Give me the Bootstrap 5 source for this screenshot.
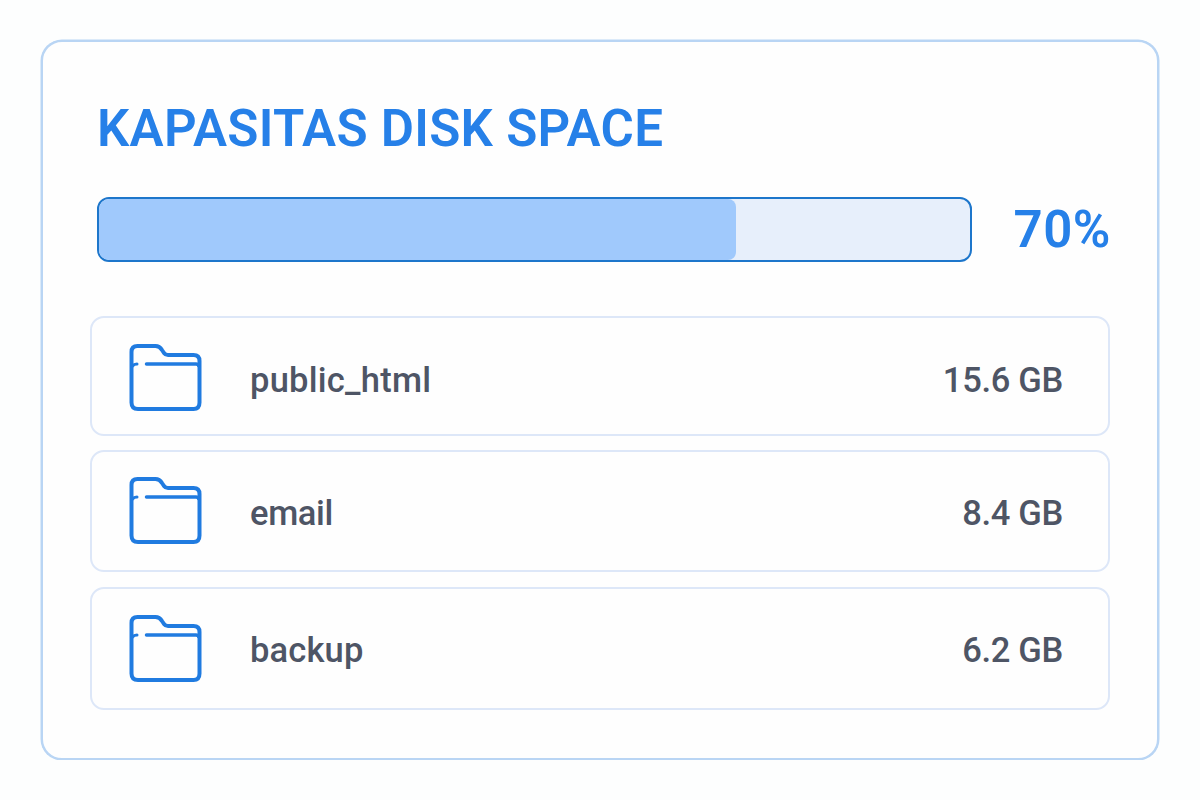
<!DOCTYPE html>
<html lang="id">
<head>
<meta charset="utf-8">
<meta name="viewport" content="width=device-width, initial-scale=1">
<title>Kapasitas Disk Space</title>
<link href="https://cdn.jsdelivr.net/npm/bootstrap@5.3.0/dist/css/bootstrap.min.css" rel="stylesheet">
<style>
  body { font-family: Roboto, "Liberation Sans", sans-serif; background: #fdfefe; color: #4e5565; }
  .disk-panel { width: 1118px; height: 720px; margin: 40px 0 0 41px; padding: 57px 47px 0 47px; border: 2px solid #b9d5f4; border-radius: 21px; background: #fefefe; box-shadow: 0 0 0 .5px #b9d5f4; }
  .disk-title { font-size: 51px; line-height: 60px; font-weight: 600; color: #2680e8; margin-left: 7px; letter-spacing: .28px; }
  .usage { margin: 38px 0 0 7px; height: 65px; }
  .usage .progress { width: 875px; height: 65px; border: 2px solid #1d76cb; border-radius: 12px; background: #e7effb; }
  .usage .progress-bar { background: #a0c9fc; border-radius: 0 8px 8px 0; }
  .usage-value { font-size: 51px; line-height: 60px; font-weight: 600; color: #2680e8; letter-spacing: .5px; margin: 1px -1px 0 0; }
  .folders { margin-top: 54px; gap: 14px; }
  .folder { width: 1020px; border: 2px solid #dde7f8; border-radius: 14px; padding: 0 45px 0 36px; font-size: 34.5px; font-weight: 500; line-height: 40px; }
  .folder:last-child { margin-top: 1px; }
  .folder svg { width: 76px; height: 72px; flex: none; margin-right: 46px; }
  .folder-size { letter-spacing: -.3px; }
  .folder-text { margin-top: 3px; }
</style>
</head>
<body>
<svg class="d-none" xmlns="http://www.w3.org/2000/svg">
  <symbol id="folder" viewBox="0 0 76 72">
    <g fill="none" stroke="#207be0" stroke-width="4" stroke-linecap="round" stroke-linejoin="round">
      <path d="M9.500 4H27.500C31 4 32.500 5.500 34 8L36 11Q37.500 13 40 13H65.500Q71.500 13 71.500 19V60.500Q71.500 67 65.500 67H10Q3.500 67 3.500 60.500V10Q3.500 4 9.500 4Z"/>
      <path d="M18.500 22H68Q70 22 70.500 23.500" stroke-width="3.500"/>
      <path d="M4.500 24Q6 22 9 22" stroke-width="3"/>
    </g>
  </symbol>
</svg>
<main class="disk-panel">
  <h1 class="disk-title mb-0">KAPASITAS DISK SPACE</h1>
  <div class="usage d-flex align-items-center justify-content-between">
    <div class="progress" role="progressbar" aria-label="Disk" aria-valuenow="70" aria-valuemin="0" aria-valuemax="100">
      <div class="progress-bar" style="width:73.1%"></div>
    </div>
    <div class="usage-value">70%</div>
  </div>
  <div class="folders d-flex flex-column">
    <div class="folder d-flex align-items-center" style="height:120px">
      <svg class="mt-1"><use href="#folder"/></svg><span class="mt-2" style="letter-spacing:.25px">public_html</span><span class="folder-size ms-auto mt-2">15.6 GB</span>
    </div>
    <div class="folder d-flex align-items-center" style="height:122px">
      <svg><use href="#folder"/></svg><span class="folder-text" style="letter-spacing:-.35px">email</span><span class="folder-text folder-size ms-auto">8.4 GB</span>
    </div>
    <div class="folder d-flex align-items-center" style="height:123px">
      <svg><use href="#folder"/></svg><span class="folder-text" style="letter-spacing:.15px">backup</span><span class="folder-text folder-size ms-auto">6.2 GB</span>
    </div>
  </div>
</main>
<script src="https://cdn.jsdelivr.net/npm/bootstrap@5.3.0/dist/js/bootstrap.bundle.min.js"></script>
</body>
</html>
